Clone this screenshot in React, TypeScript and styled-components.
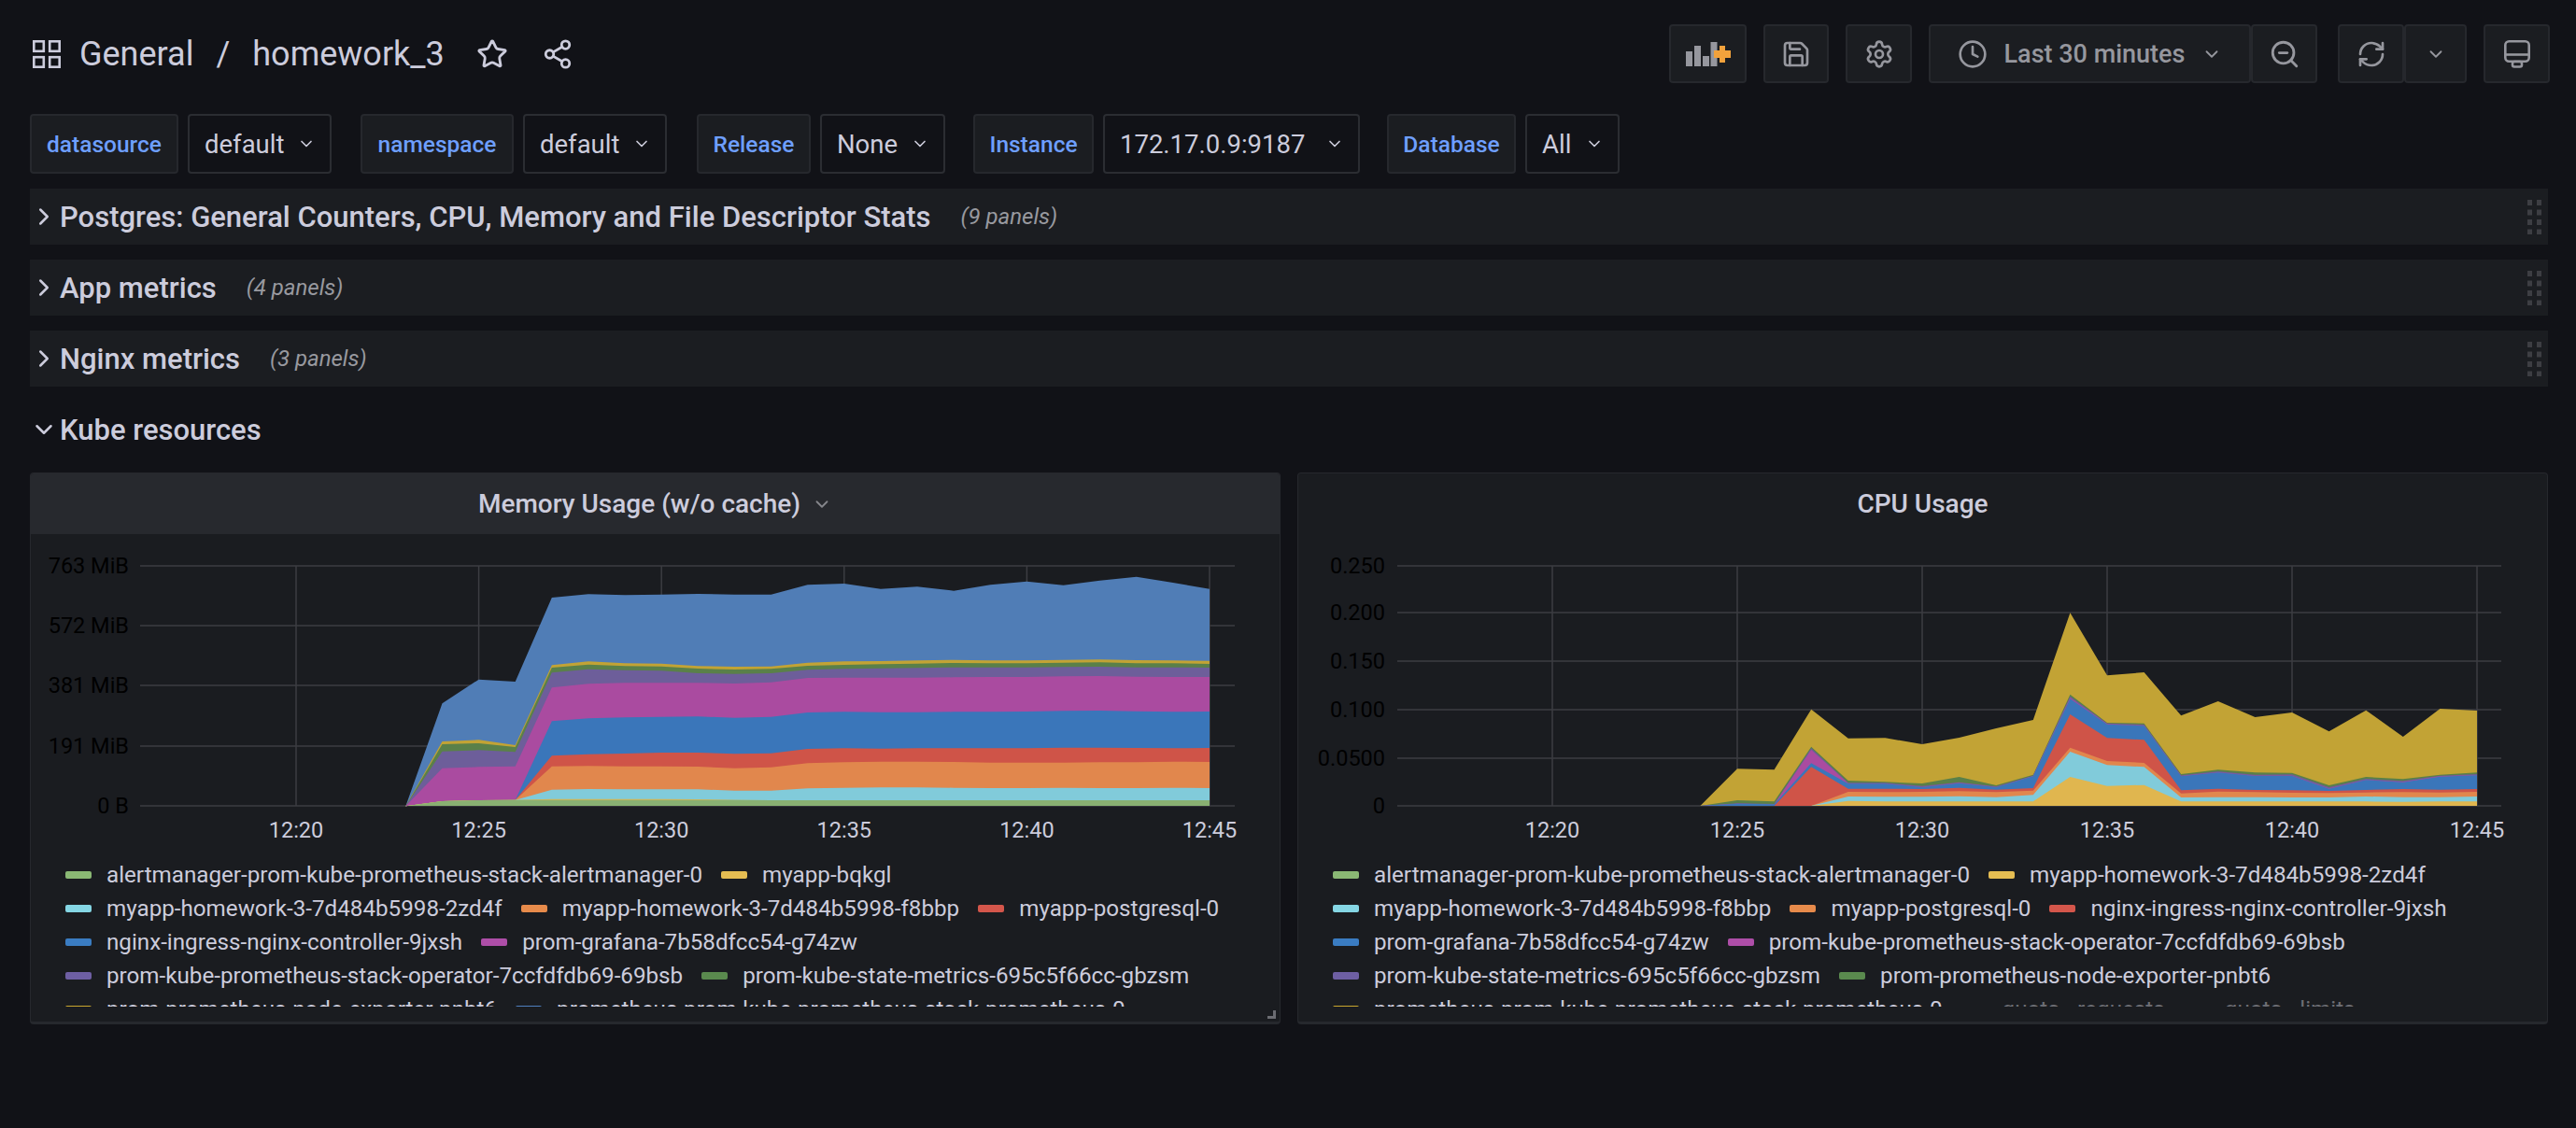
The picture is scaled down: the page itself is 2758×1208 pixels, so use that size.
import React from "react";
import styled, {createGlobalStyle} from "styled-components";
import {ChevronDown, ChevronRight, Clock, RefreshCw, Save, Settings, Share2, Star, ZoomOut} from "lucide-react";

const GlobalStyle = createGlobalStyle`
  html, body {
    margin: 0;
    background: #111217;
    color: #ccccdc;
    font-family: Roboto, "Liberation Sans", sans-serif;
  }
`
const Page = styled.div`
  display: flex;
  flex-direction: column;
  gap: 16px;
  padding: 26px 30px 0 32px;
  height: 1208px;
  box-sizing: border-box;
  overflow: hidden;
`
const TopBar = styled.header`
  display: flex;
  align-items: center;
  justify-content: space-between;
  height: 63px;
  margin-bottom: 17px;
`
const Breadcrumb = styled.div`
  display: flex;
  align-items: center;
  font-size: 36px;
  >svg{ flex-shrink: 0; }
  >.grid{ margin: 0 20px 0 3px; }
  >.slash{ margin: 0 24px; }
  >.star{ margin-left: 34px; }
  >.share{ margin-left: 36px; }
`
const Actions = styled.div`
  display: flex;
  gap: 18px;
  margin-right: -2px;
`
const Group = styled.div`
  display: flex;
  margin-left: ${p => p.$shift || 0}px;
`
const ToolButton = styled.button`
  display: flex;
  align-items: center;
  justify-content: center;
  gap: ${p => p.$gap || 0}px;
  width: ${p => p.$width}px;
  height: 63px;
  padding: 0;
  background: #1b1d21;
  border: 2px solid #26282d;
  border-radius: 4px;
  color: #96979e;
  font: 500 27px Roboto, sans-serif;
`
const Variables = styled.div`
  display: flex;
  height: 64px;
`
const VarLabel = styled.label`
  display: flex;
  align-items: center;
  justify-content: center;
  width: ${p => p.$width}px;
  margin-right: 10px;
  background: #1b1d21;
  border: 2px solid #26282d;
  border-radius: 4px;
  box-sizing: border-box;
  color: #6e9fff;
  font-size: 24.5px;
  font-weight: 500;
`
const VarSelect = styled.div`
  display: flex;
  align-items: center;
  justify-content: space-between;
  width: ${p => p.$width}px;
  margin-right: ${p => p.$gap || 0}px;
  padding: 0 15px 0 16px;
  background: #111217;
  border: 2px solid #2b2d32;
  border-radius: 4px;
  box-sizing: border-box;
  font-size: 27.5px;
`
const Row = styled.div`
  display: flex;
  align-items: center;
  height: 60px;
  flex-shrink: 0;
  background: ${p => p.$open ? "transparent" : "#1b1d21"};
  >.title{
    margin-left: 2px;
    font-size: 31px;
    font-weight: 500;
  }
  >.count{
    margin-left: 32px;
    color: #98999f;
    font-size: 24px;
    font-style: italic;
  }
  >.grip{ margin-left: auto; margin-right: 6px; }
`
const Panels = styled.div`
  display: grid;
  grid-template-columns: 1fr 1fr;
  gap: 18px;
`
const Panel = styled.section`
  position: relative;
  display: flex;
  flex-direction: column;
  height: 591px;
  background: #1a1c20;
  border: 1px solid #26282d;
  border-bottom-width: 3px;
  border-radius: 4px;
  box-sizing: border-box;
  overflow: hidden;
`
const PanelHead = styled.div`
  display: flex;
  align-items: center;
  justify-content: center;
  gap: 12px;
  height: 65px;
  flex-shrink: 0;
  background: ${p => p.$hover ? "#27292e" : "transparent"};
  font-size: 28px;
  font-weight: 500;
  >svg{ color: #85868c; }
`
const ChartSvg = styled.svg`
  display: block;
  flex-shrink: 0;
  font-family: Roboto, sans-serif;
  font-size: 23.5px;
  >text{ fill: #ccccdc; }
`
const Legend = styled.ul`
  display: flex;
  flex-wrap: wrap;
  height: 159px;
  margin: 0;
  padding: 0 20px 0 37px;
  overflow: hidden;
  list-style: none;
  align-content: flex-start;
`
const LegendItem = styled.li`
  display: flex;
  align-items: center;
  gap: 16px;
  height: 36px;
  margin-right: 20px;
  color: ${p => p.$muted ? "#6d6e74" : "#ccccdc"};
  font-size: 24.2px;
  white-space: nowrap;
  >i{
    width: 28px;
    height: 8px;
    border-radius: 2px;
    background: ${p => p.$color};
  }
`
const ResizeHandle = styled.span`
  position: absolute;
  right: 4px;
  bottom: 3px;
  width: 9px;
  height: 9px;
  border-right: 3px solid #6b6c72;
  border-bottom: 3px solid #6b6c72;
  box-sizing: border-box;
`

const colors = {
    green: {legend: "#8ab874", fill: "#89b072"},
    yellow: {legend: "#e5bd52", fill: "#e0b64f"},
    cyan: {legend: "#85d6e4", fill: "#81cbda"},
    orange: {legend: "#e78b4b", fill: "#e1874d"},
    red: {legend: "#d4564b", fill: "#cf5448"},
    blue: {legend: "#3a7cc2", fill: "#3a76ba"},
    pink: {legend: "#ae4ea8", fill: "#aa4ba0"},
    purple: {legend: "#6e5fa3", fill: "#6d5e9a"},
    darkgreen: {legend: "#5a8a4e", fill: "#5a8049"},
    gold: {legend: "#c9a72e", fill: "#c2a335"},
    sky: {legend: "#4f7fbd", fill: "#507db6"},
}
type ColorName = keyof typeof colors
type Series = {name: string, color?: ColorName, tops?: number[]}

// tops: y of the upper edge of each stacked layer, one value per minute
const memorySeries: Series[] = [
    {name: "alertmanager-prom-kube-prometheus-stack-alertmanager-0", color: "green", tops: [853,837,834,833,833,833,833,833,833,833,834,834,834,834,834,834,834,834,834,834,834,834,834]},
    {name: "myapp-bqkgl", color: "yellow", tops: [853,837,834,833,830,830,830,830,831,833,834,834,834,834,834,834,834,834,834,834,834,834,834]},
    {name: "myapp-homework-3-7d484b5998-2zd4f", color: "cyan", tops: [853,837,834,833,800,798,799,799,799,803,803,796,794,793,793,794,795,795,794,795,795,794,795]},
    {name: "myapp-homework-3-7d484b5998-f8bbp", color: "orange", tops: [853,837,834,833,725,724,725,725,726,731,728,715,712,710,710,711,713,713,713,712,712,710,711]},
    {name: "myapp-postgresql-0", color: "red", tops: [853,837,834,833,691,686,684,681,681,685,683,669,667,668,667,667,667,667,665,665,666,667,666]},
    {name: "nginx-ingress-nginx-controller-9jxsh", color: "blue", tops: [853,837,834,833,580,571,568,566,565,569,566,552,550,551,551,550,550,549,547,546,548,550,549]},
    {name: "prom-grafana-7b58dfcc54-g74zw", color: "pink", tops: [853,731,727,725,472,460,457,457,457,459,455,441,440,440,440,439,438,438,436,435,437,438,438]},
    {name: "prom-kube-prometheus-stack-operator-7ccfdfdb69-69bsb", color: "purple", tops: [853,677,673,679,424,413,416,418,426,428,426,415,412,410,409,407,407,407,406,405,407,407,408]},
    {name: "prom-kube-state-metrics-695c5f66cc-gbzsm", color: "darkgreen", tops: [853,654,651,663,408,398,403,404,411,414,412,402,399,397,395,393,394,394,392,391,394,394,396]},
    {name: "prom-prometheus-node-exporter-pnbt6", color: "gold", tops: [853,645,640,657,400,388,394,395,403,405,404,392,388,387,385,383,385,385,383,382,384,385,386]},
    {name: "prometheus-prom-kube-prometheus-stack-prometheus-0", color: "sky", tops: [853,523,446,453,183,172,175,173,171,173,173,142,138,155,148,161,142,131,143,128,116,135,155]},
]
const cpuSeries: Series[] = [
    {name: "alertmanager-prom-kube-prometheus-stack-alertmanager-0", color: "green", tops: Array(22).fill(852)},
    {name: "myapp-homework-3-7d484b5998-2zd4f", color: "yellow", tops: [852,852,852,852,836,838,838,838,838,838,759,788,785,838,838,838,838,838,838,839,838,838]},
    {name: "myapp-homework-3-7d484b5998-f8bbp", color: "cyan", tops: [852,852,852,852,822,823,823,821,824,817,678,721,727,825,824,824,825,825,822,824,824,822]},
    {name: "myapp-postgresql-0", color: "orange", tops: [852,852,852,852,807,808,807,805,808,803,665,708,714,812,806,808,810,811,809,808,809,807]},
    {name: "nginx-ingress-nginx-controller-9jxsh", color: "red", tops: [852,852,852,727,797,797,798,794,800,795,558,634,640,802,797,801,802,804,801,798,800,798]},
    {name: "prom-grafana-7b58dfcc54-g74zw", color: "blue", tops: [852,845,847,715,781,781,792,779,792,757,508,590,595,757,745,756,756,797,769,776,758,754]},
    {name: "prom-kube-prometheus-stack-operator-7ccfdfdb69-69bsb", color: "pink", tops: [852,845,847,672,780,780,791,778,791,756,505,589,594,756,744,755,755,796,768,775,757,753]},
    {name: "prom-kube-state-metrics-695c5f66cc-gbzsm", color: "purple", tops: [852,844,846,667,778,778,788,776,790,755,500,587,591,754,741,752,751,792,765,772,755,750]},
    {name: "prom-prometheus-node-exporter-pnbt6", color: "darkgreen", tops: [852,834,838,662,771,775,780,759,786,752,494,585,587,750,736,745,746,786,759,766,752,745]},
    {name: "prometheus-prom-kube-prometheus-stack-prometheus-0", color: "gold", tops: [852,733,736,542,635,634,654,633,603,576,232,433,423,562,516,567,552,613,545,630,540,546]},
    {name: "quota - requests"},
    {name: "quota - limits"},
]
const timeLabels = ["12:20", "12:25", "12:30", "12:35", "12:40", "12:45"]

type ChartProps = {
    left: number, width: number, axisRight: number, gridLeft: number, gridRight: number,
    x20: number, x45: number, firstMinute: number, base: number,
    yTicks: [string, number][], series: Series[],
}
function StackChart(props: ChartProps) {
    const {left, width, axisRight, gridLeft, gridRight, x20, x45, firstMinute, base, yTicks, series} = props
    const perMinute = (x45 - x20) / 25
    const toX = (i: number) => x20 + (firstMinute + i - 20) * perMinute
    const toY = (v: number) => 580 + v / 3
    const layers = series.filter(s => s.tops).reverse()
    return (
        <ChartSvg width={width} height={347} viewBox={`${left} 573 ${width} 347`}>
            {yTicks.map(([label, y]) => <g key={label}>
                <line x1={gridLeft} x2={gridRight} y1={y} y2={y} stroke="#3c3d42" strokeWidth={1.5}/>
                <text x={axisRight} y={y + 8} textAnchor="end">{label}</text>
            </g>)}
            {timeLabels.map((label, i) => {
                const x = x20 + i * 5 * perMinute
                return <line key={label} x1={x} x2={x} y1={607} y2={base} stroke="#3c3d42" strokeWidth={1.5}/>
            })}
            {layers.map(s => {
                const tops = s.tops!.map((v, i) => `${toX(i)},${toY(v)}`).join(" ")
                const closing = `${toX(s.tops!.length - 1)},${base} ${toX(0)},${base}`
                return <polygon key={s.name} points={`${tops} ${closing}`} fill={colors[s.color!].fill}/>
            })}
            {timeLabels.map((label, i) =>
                <text key={label} x={x20 + i * 5 * perMinute} y={898} textAnchor="middle">{label}</text>)}
        </ChartSvg>
    )
}
function ChartLegend({series}: {series: Series[]}) {
    return <Legend>
        {series.map(s => <LegendItem key={s.name} $muted={!s.color} $color={s.color ? colors[s.color].legend : "transparent"}>
            <i/>{s.name}
        </LegendItem>)}
    </Legend>
}
function GridIcon() {
    return <svg className="grid" width="30" height="30" viewBox="0 0 30 30" fill="none" stroke="#ccccdc" strokeWidth="2.6">
        <rect x="1.3" y="1.3" width="10.5" height="10.5"/><rect x="18.2" y="1.3" width="10.5" height="10.5"/>
        <rect x="1.3" y="18.2" width="10.5" height="10.5"/><rect x="18.2" y="18.2" width="10.5" height="10.5"/>
    </svg>
}
function AddPanelIcon() {
    return <svg width="48" height="26" viewBox="0 0 48 26" fill="#96979e">
        <rect x="0" y="10" width="7" height="16"/><rect x="9" y="4" width="7" height="22"/>
        <rect x="18" y="15" width="7" height="11"/><rect x="26.5" y="0" width="7" height="26"/>
        <rect x="36" y="4" width="6" height="18" fill="#f2a23c"/><rect x="30" y="9" width="18" height="8" fill="#f2a23c"/>
    </svg>
}
function TvIcon() {
    return <svg width="28" height="30" viewBox="0 0 28 30" fill="none" stroke="#96979e" strokeWidth="2.6">
        <rect x="1.3" y="1.3" width="25.4" height="21.5" rx="4"/><path d="M1.3 15.5h25.4"/>
        <rect x="9" y="23" width="10" height="5.5" rx="2"/>
    </svg>
}
function GripIcon() {
    const dots = [0, 1, 2, 3]
    return <svg className="grip" width="16" height="37" viewBox="0 0 16 37" fill="#3d3e43">
        {dots.map(i => <g key={i}>
            <rect x="0" y={i * 10.5} width="5" height="6"/><rect x="10" y={i * 10.5} width="5" height="6"/>
        </g>)}
    </svg>
}
function VariableRow() {
    return <Variables>
        <VarLabel $width={159}>datasource</VarLabel>
        <VarSelect $width={154} $gap={31}>default<ChevronDown size={20}/></VarSelect>
        <VarLabel $width={164}>namespace</VarLabel>
        <VarSelect $width={154} $gap={32}>default<ChevronDown size={20}/></VarSelect>
        <VarLabel $width={122}>Release</VarLabel>
        <VarSelect $width={134} $gap={30}>None<ChevronDown size={20}/></VarSelect>
        <VarLabel $width={129}>Instance</VarLabel>
        <VarSelect $width={275} $gap={29}>172.17.0.9:9187<ChevronDown size={20}/></VarSelect>
        <VarLabel $width={138}>Database</VarLabel>
        <VarSelect $width={101}>All<ChevronDown size={20}/></VarSelect>
    </Variables>
}
const rows = [
    {title: "Postgres: General Counters, CPU, Memory and File Descriptor Stats", count: "(9 panels)"},
    {title: "App metrics", count: "(4 panels)"},
    {title: "Nginx metrics", count: "(3 panels)"},
]
function App() {
    return (
        <Page>
            <GlobalStyle/>
            <TopBar>
                <Breadcrumb>
                    <GridIcon/>
                    <span>General</span>
                    <span className="slash">/</span>
                    <span>homework_3</span>
                    <Star className="star" size={34} strokeWidth={2}/>
                    <Share2 className="share" size={34} strokeWidth={2}/>
                </Breadcrumb>
                <Actions>
                    <ToolButton $width={83}><AddPanelIcon/></ToolButton>
                    <ToolButton $width={70}><Save size={32} strokeWidth={2}/></ToolButton>
                    <ToolButton $width={71}><Settings size={32} strokeWidth={2}/></ToolButton>
                    <Group>
                        <ToolButton $width={345} $gap={18}>
                            <Clock size={32} strokeWidth={2}/>Last 30 minutes<ChevronDown size={22}/>
                        </ToolButton>
                        <ToolButton $width={71}><ZoomOut size={34} strokeWidth={2}/></ToolButton>
                    </Group>
                    <Group $shift={4}>
                        <ToolButton $width={71}><RefreshCw size={32} strokeWidth={2}/></ToolButton>
                        <ToolButton $width={67}><ChevronDown size={22}/></ToolButton>
                    </Group>
                    <ToolButton $width={71}><TvIcon/></ToolButton>
                </Actions>
            </TopBar>
            <VariableRow/>
            {rows.map(row => <Row key={row.title}>
                <ChevronRight size={30}/>
                <span className="title">{row.title}</span>
                <span className="count">{row.count}</span>
                <GripIcon/>
            </Row>)}
            <Row $open>
                <ChevronDown size={30}/>
                <span className="title">Kube resources</span>
            </Row>
            <Panels>
                <Panel>
                    <PanelHead $hover>Memory Usage (w/o cache)<ChevronDown size={22}/></PanelHead>
                    <StackChart left={33} width={1336} axisRight={138} gridLeft={150} gridRight={1322} x20={317} x45={1295}
                                firstMinute={23} base={864} series={memorySeries}
                                yTicks={[["763 MiB", 607], ["572 MiB", 671], ["381 MiB", 735], ["191 MiB", 800], ["0 B", 864]]}/>
                    <ChartLegend series={memorySeries}/>
                    <ResizeHandle/>
                </Panel>
                <Panel>
                    <PanelHead>CPU Usage</PanelHead>
                    <StackChart left={1389} width={1336} axisRight={1482} gridLeft={1495} gridRight={2677} x20={1661} x45={2651}
                                firstMinute={24} base={864} series={cpuSeries}
                                yTicks={[["0.250", 607], ["0.200", 657], ["0.150", 709], ["0.100", 761], ["0.0500", 813], ["0", 864]]}/>
                    <ChartLegend series={cpuSeries}/>
                </Panel>
            </Panels>
        </Page>
    );
}
export default App;
